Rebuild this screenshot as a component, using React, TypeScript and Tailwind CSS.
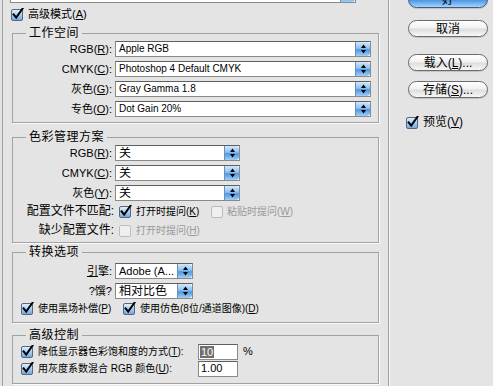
import type { ReactNode } from "react";

const font = "font-['Liberation_Sans','Noto_Sans_CJK_SC',sans-serif]";

function Check({ on = true, disabled = false }: { on?: boolean; disabled?: boolean }) {
  return (
    <svg width="13" height="13" viewBox="0 0 13 13" className="shrink-0">
      <defs>
        <linearGradient id="cb" x1="0" y1="0" x2="0" y2="1">
          <stop offset="0" stopColor="#e6f1fc" />
          <stop offset="0.5" stopColor="#a9cdf0" />
          <stop offset="1" stopColor="#6fa6de" />
        </linearGradient>
      </defs>
      <rect
        x="0.5"
        y="1.5"
        width="11"
        height="11"
        rx="1.5"
        fill={disabled ? "#efefef" : "url(#cb)"}
        stroke={disabled ? "#bdbdbd" : "#56687f"}
      />
      {on && !disabled && (
        <path d="M2.6 6.4 L5.2 9.6 L11.6 0.6" fill="none" stroke="#000" strokeWidth="2" strokeLinecap="square" />
      )}
    </svg>
  );
}

function Stepper() {
  return (
    <div className="flex h-full w-[15px] shrink-0 items-center justify-center rounded-r-[3px] border-l border-[#6d8fb4] bg-[linear-gradient(to_bottom,#d3e8fc,#8cc0f0_45%,#4f96e0_55%,#9fd0f8)]">
      <svg width="9" height="12" viewBox="0 0 9 12">
        <path d="M2 5 L7 5 L4.5 1.5 Z" fill="#000" />
        <path d="M2 7 L7 7 L4.5 10.5 Z" fill="#000" />
      </svg>
    </div>
  );
}

function Select({ value, w, size = "text-[10px]" }: { value: string; w: string; size?: string }) {
  return (
    <div className={`flex h-[16px] items-center border border-[#8a8a8a] border-t-[#5f5f5f] bg-white ${w}`}>
      <span className={`flex-1 truncate pl-[3px] leading-none ${size}`}>{value}</span>
      <Stepper />
    </div>
  );
}

// group box: 1px etched border, title sits on the top line
function Group({ title, children, className }: { title: string; children: ReactNode; className: string }) {
  return (
    <div className={`ml-[9px] w-[367px] border border-[#a2a2a2] shadow-[1px_1px_0_#fbfbfb] ${className}`}>
      <div className="-mt-[9px] ml-[13px] flex h-[16px] items-center">
        <span className="bg-[#e4e4e4] px-[3px] text-[12px] leading-[16px] tracking-[0.5px]">{title}</span>
      </div>
      {children}
    </div>
  );
}

function Row({ label, children }: { label: ReactNode; children: ReactNode }) {
  return (
    <div className="flex h-[16px] items-center">
      <span className="w-[99px] text-right text-[11px] leading-none">{label}</span>
      <div className="ml-[3px]">{children}</div>
    </div>
  );
}

function Aqua({ children, blue = false, className }: { children: ReactNode; blue?: boolean; className: string }) {
  return (
    <div
      className={`flex h-[17px] w-[80px] items-center justify-center rounded-full border text-[12px] leading-none shadow-[0_1px_1px_rgba(0,0,0,0.15)] ${
        blue
          ? "border-[#3b5c86] bg-[linear-gradient(to_bottom,#c6e2fb,#7db7ee_45%,#4d97e3_55%,#a6d4fb)]"
          : "border-[#6a6a6a] bg-[linear-gradient(to_bottom,#ffffff,#f2f2f2_45%,#dedede_55%,#f7f7f7)]"
      } ${className}`}
    >
      {children}
    </div>
  );
}

export default function App() {
  return (
    <div className={`flex h-[386px] w-[493px] overflow-hidden bg-[#e4e4e4] text-black ${font}`}>
      <div className="ml-[2px] flex w-[387px] shrink-0 flex-col border-x border-[#a0a0a0] shadow-[1px_0_0_#f8f8f8]">
        <div className="-mt-[13px] ml-[7px]">
          <Select value="" w="w-[346px]" />
        </div>

        <div className="ml-[8px] mt-[5px] flex h-[13px] items-center gap-[4px] text-[11px]">
          <Check />
          <span>
            高级模式(<u>A</u>)
          </span>
        </div>

        <Group title="工作空间" className="mt-[12px] pb-[5px]">
          <div className="flex flex-col gap-[4px]">
            <Row label={<>RGB(<u>R</u>):</>}>
              <Select value="Apple RGB" w="w-[256px]" />
            </Row>
            <Row label={<>CMYK(<u>C</u>):</>}>
              <Select value="Photoshop 4 Default CMYK" w="w-[256px]" />
            </Row>
            <Row label={<>灰色(<u>G</u>):</>}>
              <Select value="Gray Gamma 1.8" w="w-[256px]" />
            </Row>
            <Row label={<>专色(<u>O</u>):</>}>
              <Select value="Dot Gain 20%" w="w-[256px]" />
            </Row>
          </div>
        </Group>

        <Group title="色彩管理方案" className="mt-[14px] pb-[3px]">
          <div className="flex flex-col gap-[4px]">
            <Row label={<>RGB(<u>R</u>):</>}>
              <Select value="关" w="w-[125px]" size="text-[12px]" />
            </Row>
            <Row label={<>CMYK(<u>C</u>):</>}>
              <Select value="关" w="w-[125px]" size="text-[12px]" />
            </Row>
            <Row label={<>灰色(<u>Y</u>):</>}>
              <Select value="关" w="w-[125px]" size="text-[12px]" />
            </Row>
          </div>
          <div className="mt-[1px] flex h-[18px] items-center">
            <span className="w-[101px] text-right text-[12px] leading-none">配置文件不匹配:</span>
            <div className="ml-[5px] flex items-center text-[10px]">
              <Check />
              <span className="ml-[4px] w-[75px]">
                打开时提问(<u>K</u>)
              </span>
              <Check disabled />
              <span className="ml-[3px] text-[#9a9a9a]">
                粘贴时提问(<u>W</u>)
              </span>
            </div>
          </div>
          <div className="mt-[1px] flex h-[18px] items-center">
            <span className="w-[101px] text-right text-[12px] leading-none">缺少配置文件:</span>
            <div className="ml-[5px] flex items-center text-[10px]">
              <Check disabled />
              <span className="ml-[4px] text-[#9a9a9a]">
                打开时提问(<u>H</u>)
              </span>
            </div>
          </div>
        </Group>

        <Group title="转换选项" className="mt-[9px] pb-[6px]">
          <div className="flex flex-col gap-[4px] pt-[3px]">
            <Row label={<><u>引</u>擎:</>}>
              <Select value="Adobe (A..." w="w-[78px]" size="text-[11px]" />
            </Row>
            <Row label="?馔?">
              <Select value="相对比色" w="w-[78px]" size="text-[12px]" />
            </Row>
          </div>
          <div className="ml-[8px] mt-[1px] flex h-[16px] items-center text-[10px]">
            <Check />
            <span className="ml-[4px] w-[85px]">
              使用黑场补偿(<u>P</u>)
            </span>
            <Check />
            <span className="ml-[4px]">
              使用仿色(8位/通道图像)(<u>D</u>)
            </span>
          </div>
        </Group>

        <Group title="高级控制" className="mt-[12px] pb-[6px]">
          <div className="flex flex-col">
            <div className="ml-[8px] flex h-[17px] items-center text-[10px]">
              <Check />
              <span className="ml-[4px] w-[160px]">
                降低显示器色彩饱和度的方式(<u>T</u>):
              </span>
              <div className="flex h-[16px] w-[40px] items-center border border-[#8a8a8a] border-t-[#5f5f5f] bg-white pl-[1px] text-[11px]">
                <span className="bg-[#6f6f6f] px-[1px] leading-[12px] text-white">10</span>
              </div>
              <span className="ml-[5px] text-[11px]">%</span>
            </div>
            <div className="ml-[8px] flex h-[17px] items-center text-[10px]">
              <Check />
              <span className="ml-[4px] w-[160px]">
                用灰度系数混合 RGB 颜色(<u>U</u>):
              </span>
              <div className="flex h-[16px] w-[40px] items-center border border-[#8a8a8a] border-t-[#5f5f5f] bg-white pl-[2px] text-[11px]">
                1.00
              </div>
            </div>
          </div>
        </Group>
      </div>

      <div className="flex flex-1 flex-col items-start pl-[19px]">
        <Aqua blue className="-mt-[9px]">好</Aqua>
        <Aqua className="mt-[12px]">取消</Aqua>
        <Aqua className="mt-[17px]">
          载入(<u>L</u>)...
        </Aqua>
        <Aqua className="mt-[10px]">
          存储(<u>S</u>)...
        </Aqua>
        <div className="ml-[-2px] mt-[17px] flex h-[14px] items-center gap-[4px] text-[12px]">
          <Check />
          <span>
            预览(<u>V</u>)
          </span>
        </div>
      </div>
    </div>
  );
}
